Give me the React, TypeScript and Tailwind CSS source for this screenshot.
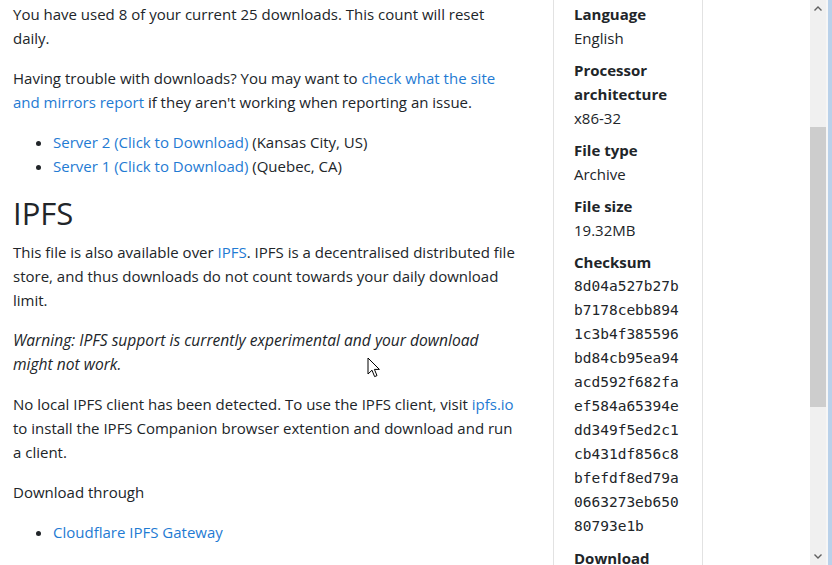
import React from "react";

const link = "text-[#1f7bd3]";

const checksum = [
  "8d04a527b27b",
  "b7178cebb894",
  "1c3b4f385596",
  "bd84cb95ea94",
  "acd592f682fa",
  "ef584a65394e",
  "dd349f5ed2c1",
  "cb431df856c8",
  "bfefdf8ed79a",
  "0663273eb650",
  "80793e1b",
];

function Cursor() {
  return (
    <svg
      className="pointer-events-none absolute left-[367px] top-[357px]"
      width="14"
      height="22"
      viewBox="0 0 14 22"
      aria-hidden
    >
      <path
        d="M1 1 L1 17 L5 13.2 L7.6 19.6 L10 18.6 L7.4 12.4 L12.4 12.4 Z"
        fill="#fff"
        stroke="#000"
        strokeWidth="1"
        strokeLinejoin="round"
      />
    </svg>
  );
}

function Meta({ label, children }: { label: React.ReactNode; children: React.ReactNode }) {
  return (
    <>
      <dt className="font-bold">{label}</dt>
      <dd className="mb-2">{children}</dd>
    </>
  );
}

export default function App() {
  return (
    <div className="relative flex h-[565px] w-[832px] overflow-hidden bg-white font-['Open_Sans',sans-serif] text-[15px] leading-6 text-[#212529]">
      <main className="w-[553px] shrink-0 pl-[13px] pr-[35px] pt-[2px]">
        <p className="mb-4">
          You have used 8 of your current 25 downloads. This count will reset daily.
        </p>
        <p className="mb-4">
          Having trouble with downloads? You may want to{" "}
          <a className={link}>check what the site and mirrors report</a> if they aren't
          working when reporting an issue.
        </p>
        <ul className="mb-4 list-disc pl-10">
          <li>
            <a className={link}>Server 2 (Click to Download)</a> (Kansas City, US)
          </li>
          <li>
            <a className={link}>Server 1 (Click to Download)</a> (Quebec, CA)
          </li>
        </ul>
        <h2 className="mb-2 text-[31px] leading-[38px] font-normal">IPFS</h2>
        <p className="mb-4">
          This file is also available over <a className={link}>IPFS</a>. IPFS is a
          decentralised distributed file store, and thus downloads do not count towards your
          daily download limit.
        </p>
        <p className="mb-4 text-[15.6px] italic">
          Warning: IPFS support is currently experimental and your download might not work.
        </p>
        <p className="mb-4">
          No local IPFS client has been detected. To use the IPFS client, visit{" "}
          <a className={link}>ipfs.io</a> to install the IPFS Companion browser extention and
          download and run a client.
        </p>
        <p className="mb-4">Download through</p>
        <ul className="list-disc pl-10">
          <li>
            <a className={link}>Cloudflare IPFS Gateway</a>
          </li>
        </ul>
      </main>

      <aside className="w-[150px] shrink-0 border-x border-[#e2e2e2] px-5 pt-[2px]">
        <dl>
          <Meta label="Language">English</Meta>
          <Meta label="Processor architecture">x86-32</Meta>
          <Meta label="File type">Archive</Meta>
          <Meta label="File size">19.32MB</Meta>
          <Meta label="Checksum">
            <div className="font-['DejaVu_Sans_Mono',monospace] text-[14.5px] leading-6">
              {checksum.map((c) => (
                <div key={c}>{c}</div>
              ))}
            </div>
          </Meta>
          <Meta label="Download">Mirrors</Meta>
        </dl>
      </aside>

      <div className="flex-1" />

      <div className="flex w-[16px] shrink-0 flex-col bg-[#f0f0f0]">
        <div className="flex h-[17px] items-center justify-center text-[#606060]">
          <svg width="8" height="5" viewBox="0 0 8 5">
            <path d="M0.5 4.5 L4 1 L7.5 4.5" fill="none" stroke="currentColor" strokeWidth="1.4" />
          </svg>
        </div>
        <div className="h-[110px]" />
        <div className="h-[280px] bg-[#cdcdcd]" />
        <div className="flex-1" />
        <div className="flex h-[17px] items-center justify-center text-[#606060]">
          <svg width="8" height="5" viewBox="0 0 8 5">
            <path d="M0.5 0.5 L4 4 L7.5 0.5" fill="none" stroke="currentColor" strokeWidth="1.4" />
          </svg>
        </div>
      </div>
      <div className="w-[2px] shrink-0 bg-[#f6f6f6]" />
      <div className="w-[4px] shrink-0 bg-[#b9d1ea]" />

      <Cursor />
    </div>
  );
}
